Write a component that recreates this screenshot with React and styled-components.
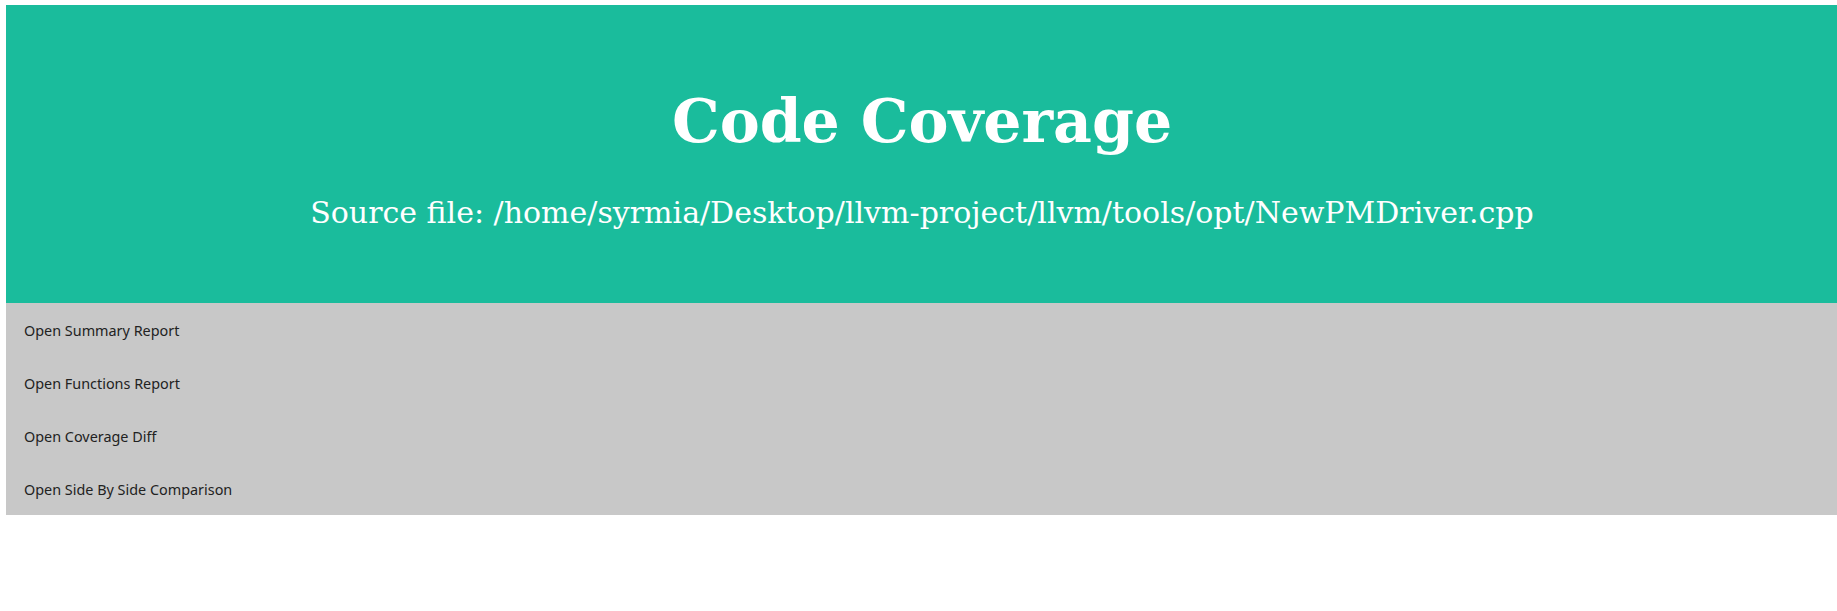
import React from "react";
import styled, { createGlobalStyle } from "styled-components";

const GlobalStyle = createGlobalStyle`
	body {
		margin: 0;
		background: #fff;
	}
`;

const links = [
	"Open Summary Report",
	"Open Functions Report",
	"Open Coverage Diff",
	"Open Side By Side Comparison",
];

function App() {
	return (
		<>
			<GlobalStyle />
			<StPage>
				<StHeader>
					<StTitle>Code Coverage</StTitle>
					<StSubtitle>
						Source file: /home/syrmia/Desktop/llvm-project/llvm/tools/opt/NewPMDriver.cpp
					</StSubtitle>
				</StHeader>
				<StMenu>
					{links.map((label) => (
						<StMenuItem key={label}>{label}</StMenuItem>
					))}
				</StMenu>
			</StPage>
		</>
	);
}

export default App;

const StPage = styled.div`
	padding: 5px 0 0 6px;
	overflow: hidden;
`;

const StHeader = styled.header`
	box-sizing: border-box;
	width: calc(100% + 1px);
	height: 298px;
	padding-top: 81px;
	background-color: #1abc9c;
	color: #fff;
	text-align: center;
	font-family: "DejaVu Serif", serif;
`;

const StTitle = styled.h1`
	margin: 0;
	font-size: 60px;
	line-height: 70px;
	font-weight: 700;
`;

const StSubtitle = styled.p`
	margin: 39px 0 0;
	font-size: 30px;
	line-height: 36px;
	font-weight: 400;
`;

const StMenu = styled.nav`
	display: flex;
	flex-direction: column;
	width: calc(100% + 1px);
	background-color: #c8c8c8;
`;

const StMenuItem = styled.a`
	box-sizing: border-box;
	display: flex;
	align-items: center;
	height: 53px;
	padding: 2px 0 0 18px;
	color: #222;
	font-family: "Noto Sans", sans-serif;
	font-size: 14.4px;
	cursor: pointer;
`;
